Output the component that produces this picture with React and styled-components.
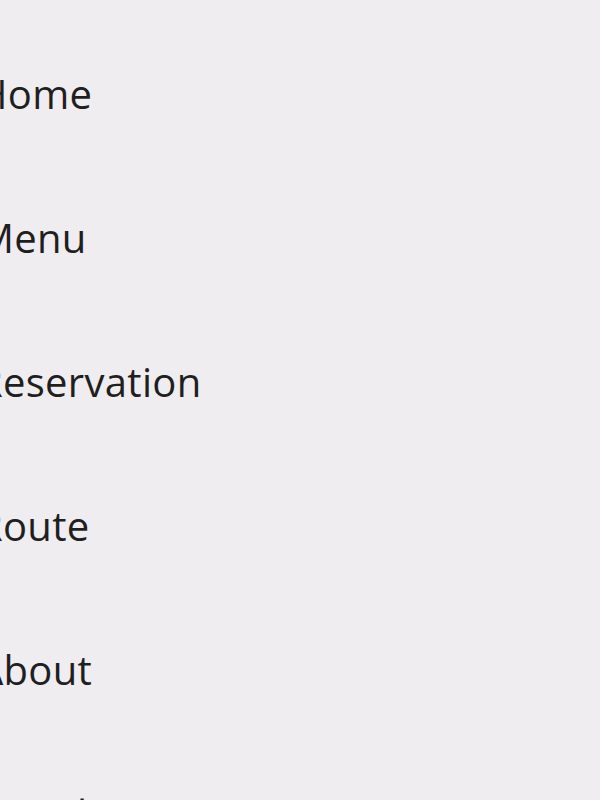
import React from "react";
import styled, { createGlobalStyle } from "styled-components";

const GlobalStyle = createGlobalStyle`
  html, body {
    margin: 0;
    padding: 0;
    background: #efedf0;
    overflow: hidden;
  }
`;

const Drawer = styled.nav`
  width: 600px;
  height: 800px;
  overflow: hidden;
  background: #efedf0;
  padding-top: 21px;
  box-sizing: border-box;
`;

const Item = styled.div`
  height: 144px;
  display: flex;
  align-items: center;
  margin-left: -22px;
  font-family: "Open Sans", "Noto Sans", sans-serif;
  font-size: 40px;
  letter-spacing: 0.3px;
  color: #1f1f1f;
  white-space: nowrap;
`;

const items = ["Home", "Menu", "Reservation", "Route", "About", "Social"];

export default function App() {
  return (
    <>
      <GlobalStyle />
      <Drawer>
        {items.map((label) => (
          <Item key={label}>{label}</Item>
        ))}
      </Drawer>
    </>
  );
}
